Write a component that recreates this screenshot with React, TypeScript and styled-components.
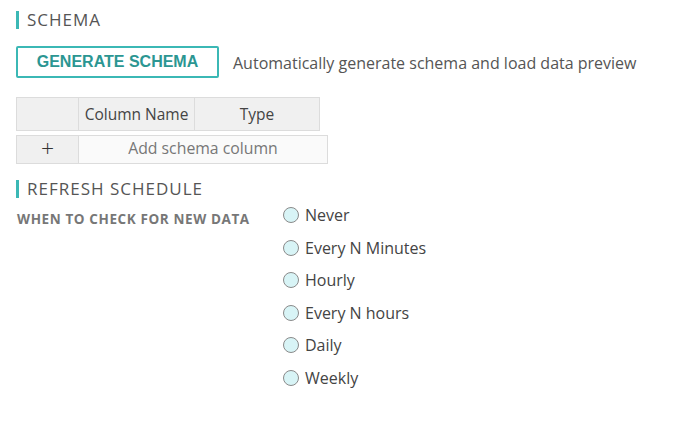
import React from "react";
import styled, { createGlobalStyle } from "styled-components";

const Global = createGlobalStyle`
  html, body { margin: 0; padding: 0; background: #fff; }
  body { font-family: "Open Sans", "Lato", sans-serif; color: #555; }
`;

const Page = styled.div`
  padding: 11px 16px;
  display: flex;
  flex-direction: column;
`;

const SectionTitle = styled.h2<{ $mt?: number }>`
  margin: ${(p) => p.$mt ?? 0}px 0 0 0;
  border-left: 3px solid #3bb8b5;
  padding-left: 8px;
  font-size: 17px;
  font-weight: 400;
  line-height: 18px;
  letter-spacing: 1px;
  color: #555;
`;

const ActionRow = styled.div`
  display: flex;
  align-items: center;
  gap: 14px;
  margin-top: 17px;
`;

const OutlineButton = styled.button`
  width: 203px;
  height: 32px;
  border: 2px solid #3bb8b5;
  border-radius: 2px;
  background: #fff;
  color: #2b9692;
  font-family: "Liberation Sans", Arial, sans-serif;
  font-weight: 700;
  font-size: 16px;
  padding: 0 0 1px 0;
  cursor: pointer;
`;

const Hint = styled.span`
  font-size: 16px;
  color: #555;
  padding-top: 2px;
`;

const SchemaTable = styled.div`
  display: grid;
  grid-template-columns: 61px 116px 125px;
  width: 304px;
  box-sizing: border-box;
  margin-top: 19px;
  border: 1px solid #dcdcdc;
  background: #f0f0f0;
`;

const HeadCell = styled.div<{ $first?: boolean }>`
  height: 32px;
  display: flex;
  align-items: center;
  justify-content: center;
  font-size: 15.5px;
  color: #444;
  border-left: ${(p) => (p.$first ? "none" : "1px solid #dcdcdc")};
`;

const AddRow = styled.div`
  display: grid;
  grid-template-columns: 61px 1fr;
  width: 312px;
  box-sizing: border-box;
  margin-top: 4px;
  border: 1px solid #dcdcdc;
`;

const PlusCell = styled.div`
  height: 27px;
  background: #f0f0f0;
  display: flex;
  align-items: center;
  justify-content: center;
  font-size: 23px;
  font-weight: 300;
  line-height: 1;
  color: #333;
  padding-bottom: 2px;
  box-sizing: border-box;
`;

const AddCell = styled.div`
  background: #fafafa;
  display: flex;
  align-items: center;
  justify-content: center;
  font-size: 15.8px;
  color: #777;
  padding-bottom: 3px;
  border-left: 1px solid #dcdcdc;
`;

const ScheduleRow = styled.div`
  display: flex;
  margin-top: 7px;
`;

const FieldLabel = styled.div`
  width: 266px;
  padding-left: 1px;
  padding-top: 5px;
  font-size: 13.5px;
  font-weight: 700;
  letter-spacing: 0.6px;
  color: #777;
`;

const RadioList = styled.div`
  display: flex;
  flex-direction: column;
  gap: 12.6px;
`;

const RadioOption = styled.label`
  display: flex;
  align-items: center;
  gap: 6px;
  height: 20px;
  font-size: 16px;
  color: #444;
  cursor: pointer;
`;

const RadioDot = styled.span`
  width: 14px;
  height: 14px;
  border-radius: 50%;
  border: 1px solid #8a8a8a;
  background: #d8f4f6;
  flex: none;
`;

const options = ["Never", "Every N Minutes", "Hourly", "Every N hours", "Daily", "Weekly"];

export default function App() {
  return (
    <>
      <Global />
      <Page>
        <SectionTitle>SCHEMA</SectionTitle>
        <ActionRow>
          <OutlineButton>GENERATE SCHEMA</OutlineButton>
          <Hint>Automatically generate schema and load data preview</Hint>
        </ActionRow>
        <SchemaTable>
          <HeadCell $first />
          <HeadCell>Column Name</HeadCell>
          <HeadCell>Type</HeadCell>
        </SchemaTable>
        <AddRow>
          <PlusCell>+</PlusCell>
          <AddCell>Add schema column</AddCell>
        </AddRow>
        <SectionTitle $mt={16}>REFRESH SCHEDULE</SectionTitle>
        <ScheduleRow>
          <FieldLabel>WHEN TO CHECK FOR NEW DATA</FieldLabel>
          <RadioList>
            {options.map((o) => (
              <RadioOption key={o}>
                <RadioDot />
                {o}
              </RadioOption>
            ))}
          </RadioList>
        </ScheduleRow>
      </Page>
    </>
  );
}
